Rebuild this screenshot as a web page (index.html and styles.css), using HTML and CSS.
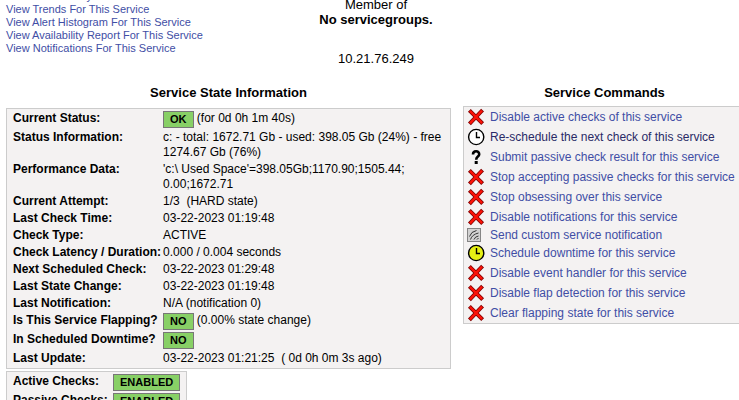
FILE: index.html
```html
<!DOCTYPE html>
<html lang="en">
<head>
  <meta charset="UTF-8" />
  <title>Extended Information</title>
  <link rel="stylesheet" href="styles.css">
</head>
<body>
  <svg class="sprite" width="0" height="0">
    <symbol id="cross" viewBox="0 0 20 20">
      <path d="M4.800 4.800l10.400 10.400M15.200 4.500L4.800 15.500" stroke="#7d0000" stroke-width="4" stroke-linecap="square" fill="none"/>
      <path d="M4.800 4.800l10.400 10.400M15.200 4.500L4.800 15.500" stroke="#fb1207" stroke-width="2.400" stroke-linecap="square" fill="none"/>
    </symbol>
    <symbol id="clock" viewBox="0 0 20 20">
      <circle cx="10.2" cy="10" r="7.600" fill="currentColor" stroke="#000" stroke-width="1.400"/>
      <path d="M10.500 5v5.500H14" stroke="#000" stroke-width="1.400" fill="none"/>
    </symbol>
    <symbol id="question" viewBox="0 0 20 20">
      <path d="M7 7.500C7 3.200 13.200 3.200 13.200 7.200c0 2.600-3 2.200-3 5.600" stroke="#000" stroke-width="2.600" fill="none"/>
      <rect x="8.700" y="14" width="3" height="3" fill="#000"/>
    </symbol>
    <symbol id="notify" viewBox="0 0 20 20">
      <rect x="1.500" y="3.500" width="13" height="13" fill="#d2d2d2" stroke="#858585"/>
      <path d="M3.500 11.500Q5 6.500 10.500 5.500M4.500 14.500Q6 9.500 12.500 8M8 14.500Q9 11.500 12.500 11M11 14.500l1.500-1.500" stroke="#333" stroke-width="1" fill="none"/>
    </symbol>
  </svg>

  <div class="page">
    <div class="top">
      <div class="views">
        <a href="#">View Alert History For This Service</a>
        <a href="#">View Trends For This Service</a>
        <a href="#">View Alert Histogram For This Service</a>
        <a href="#">View Availability Report For This Service</a>
        <a href="#">View Notifications For This Service</a>
      </div>
      <div class="member">
        <div>Member of</div>
        <b>No servicegroups.</b>
        <div class="address">10.21.76.249</div>
      </div>
    </div>

    <div class="columns">
      <div class="state">
        <h2>Service State Information</h2>
        <table class="panel info">
          <tr><th>Current Status:</th><td><span class="badge">OK</span> (for 0d 0h 1m 40s)</td></tr>
          <tr><th>Status Information:</th><td>c: - total: 1672.71 Gb - used: 398.05 Gb (24%) - free 1274.67 Gb (76%)</td></tr>
          <tr><th>Performance Data:</th><td>'c:\ Used Space'=398.05Gb;1170.90;1505.44;<wbr>0.00;1672.71</td></tr>
          <tr><th>Current Attempt:</th><td>1/3&nbsp; (HARD state)</td></tr>
          <tr><th>Last Check Time:</th><td>03-22-2023 01:19:48</td></tr>
          <tr><th>Check Type:</th><td>ACTIVE</td></tr>
          <tr><th>Check Latency / Duration:</th><td>0.000 / 0.004 seconds</td></tr>
          <tr><th>Next Scheduled Check:</th><td>03-22-2023 01:29:48</td></tr>
          <tr><th>Last State Change:</th><td>03-22-2023 01:19:48</td></tr>
          <tr><th>Last Notification:</th><td>N/A (notification 0)</td></tr>
          <tr><th>Is This Service Flapping?</th><td><span class="badge">NO</span> (0.00% state change)</td></tr>
          <tr><th>In Scheduled Downtime?</th><td><span class="badge">NO</span></td></tr>
          <tr><th>Last Update:</th><td>03-22-2023 01:21:25&nbsp; ( 0d 0h 0m 3s ago)</td></tr>
        </table>
        <table class="panel checks">
          <tr><th>Active Checks:</th><td><span class="badge">ENABLED</span></td></tr>
          <tr><th>Passive Checks:</th><td><span class="badge">ENABLED</span></td></tr>
        </table>
      </div>

      <div class="commands">
        <h2>Service Commands</h2>
        <ul class="panel list">
          <li><svg><use href="#cross"/></svg><a href="#">Disable active checks of this service</a></li>
          <li><svg class="white"><use href="#clock"/></svg><a class="hovered" href="#">Re-schedule the next check of this service</a></li>
          <li><svg><use href="#question"/></svg><a href="#">Submit passive check result for this service</a></li>
          <li><svg><use href="#cross"/></svg><a href="#">Stop accepting passive checks for this service</a></li>
          <li><svg><use href="#cross"/></svg><a href="#">Stop obsessing over this service</a></li>
          <li><svg><use href="#cross"/></svg><a href="#">Disable notifications for this service</a></li>
          <li class="short"><svg><use href="#notify"/></svg><a href="#">Send custom service notification</a></li>
          <li><svg class="yellow"><use href="#clock"/></svg><a href="#">Schedule downtime for this service</a></li>
          <li><svg><use href="#cross"/></svg><a href="#">Disable event handler for this service</a></li>
          <li><svg><use href="#cross"/></svg><a href="#">Disable flap detection for this service</a></li>
          <li><svg><use href="#cross"/></svg><a href="#">Clear flapping state for this service</a></li>
        </ul>
      </div>
    </div>
  </div>
</body>
</html>
```
FILE: styles.css
```css
body {
  margin: 0;
  font-family: "Liberation Sans", Arial, sans-serif;
  font-size: 12px;
  line-height: 15px;
  background: white;
  color: black;
  overflow: hidden;
}
a {
  color: #414ea5;
  text-decoration: none;
}
a.hovered {
  color: #2a2a66;
}
.sprite {
  display: block;
}
.page {
  box-sizing: border-box;
  min-width: 752px;
  padding: 0 6px;
}
.top {
  display: grid;
  grid-template-columns: 1fr auto 1fr;
  align-items: start;
}
.views {
  display: flex;
  flex-direction: column;
  margin-top: -10px;
  font-size: 11px;
  line-height: 13px;
}
.member {
  margin-top: -3px;
  font-size: 13px;
  text-align: center;
}
.address {
  margin-top: 24px;
}
.columns {
  display: grid;
  grid-template-columns: 445px 1fr;
  column-gap: 12px;
  align-items: start;
  margin-top: 19px;
}
h2 {
  margin: 0;
  font-size: 13px;
  line-height: 15px;
  text-align: center;
}
.panel {
  box-sizing: border-box;
  background: #f4f2f2;
  border: 1px solid #ccc;
}
table {
  border-collapse: separate;
  border-spacing: 2px;
}
th {
  padding: 0 0 0 4px;
  text-align: left;
  white-space: nowrap;
}
td {
  padding: 0 4px 0 0;
}
th, td {
  vertical-align: top;
}
.badge {
  display: inline-block;
  padding: 0 6px;
  border: 1px solid #777;
  background: #88d066;
  font-size: 11px;
  font-weight: bold;
  vertical-align: top;
}
.info {
  width: 100%;
  margin-top: 8px;
}
.info th {
  width: 148px;
}
.checks {
  margin-top: 2px;
}
.checks th {
  width: 98px;
}
.list {
  margin: 6px 0 0;
  padding: 0 2px;
  list-style: none;
}
.list li {
  display: flex;
  align-items: center;
  gap: 4px;
  height: 20px;
  white-space: nowrap;
}
.list .short {
  height: 16px;
}
.list svg {
  flex: none;
  width: 20px;
  height: 20px;
}
.white {
  color: white;
}
.yellow {
  color: #e6f014;
}
```
